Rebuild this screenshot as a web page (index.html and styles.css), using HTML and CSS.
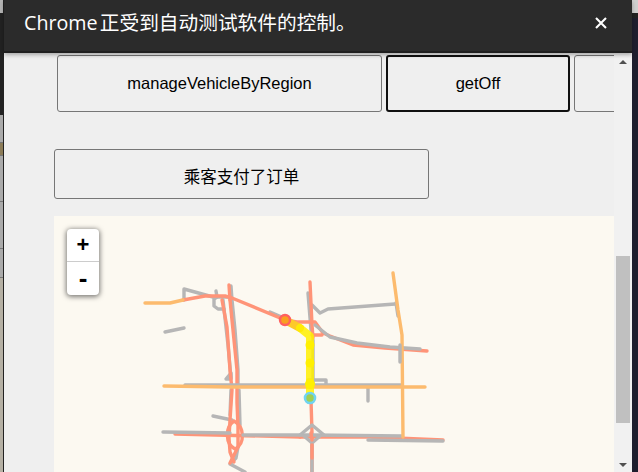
FILE: index.html
```html
<!DOCTYPE html>
<html lang="zh">
<head>
<meta charset="utf-8">
<title>Chrome</title>
<link rel="stylesheet" href="styles.css">
</head>
<body>
<div class="desktop">
  <div class="edge-left">
    <div class="el el-top"></div>
    <div class="el el-dark"></div>
    <div class="el el-a"></div>
    <div class="el el-b"></div>
    <div class="el el-c"></div>
    <div class="el el-d"></div>
    <div class="el el-e"></div>
    <div class="el el-f"></div>
  </div>
  <div class="window">
    <div class="infobar">
      <span class="info-text">Chrome 正受到自动测试软件的控制。</span>
      <svg class="close" width="12" height="12" viewBox="0 0 12 12"><path d="M1 1L11 11M11 1L1 11" stroke="#fff" stroke-width="2.1" fill="none"/></svg>
    </div>
    <div class="content">
      <div class="scroller">
        <div class="btn-row">
          <button class="btn btn-wide">manageVehicleByRegion</button>
          <button class="btn btn-focus">getOff</button>
          <button class="btn btn-next"></button>
        </div>
        <button class="btn btn-pay">乘客支付了订单</button>
        <div class="map">
          <svg class="roads" width="560" height="256" viewBox="54 216 560 256">
            <g class="gray">
              <path d="M184 300V289L213 297L230 297"/>
              <path d="M165 332L184 328"/>
              <path d="M216 291L217 297L214 299V306L218 309H224"/>
              <path d="M223 300L228 345L231 378"/>
              <path d="M231 286L232 300L235 330L238 370L238 385"/>
              <path d="M231 390L230 415"/>
              <path d="M239 390L240 425"/>
              <path d="M226 379L231 373V379Z"/>
              <path d="M213 416L232 420"/>
              <path d="M238 447L236 458L230 464L245 472"/>
              <path d="M308 293L311 330"/>
              <path d="M313 340L313 386"/>
              <path d="M312 305L320 313L328 309L395 304"/>
              <path d="M396 303L398 316"/>
              <path d="M308 380H326V386"/>
              <path d="M368 386V401"/>
              <path d="M270 312L284 318"/>
            </g>
            <g class="salmon">
              <path d="M183 300L205 296L225 296L232 298L285 320"/>
              <path d="M229 285L230 300"/>
              <path d="M222 300L227 327L230 370L232 390L230 420L229 438L230 452L234 462"/>
              <path d="M230 300L233 330L237 370L237 403L238 427L238 447L230 463"/>
              <path d="M234 421C225 427 225 444 235 449C245 444 245 427 234 421Z"/>
              <path d="M175 434L300 437"/>
              <path d="M310 282L312 325L313 338"/>
              <path d="M285 320L297 322H315L323 333L330 336L353 345L385 348L427 351"/>
              <path d="M312 335H322"/>
              <path d="M311 400L312 433L312 472"/>
              <path d="M372 437L443 440"/>
              <path d="M300 437H395"/>
            </g>
            <g class="gray">
              <path d="M163 432L230 433"/>
              <path d="M243 435L312 435L402 436"/>
              <path d="M368 440L443 441"/>
              <path d="M300 435L312 425L324 435"/>
              <path d="M304 436L312 443L320 436"/>
              <path d="M312 445V472"/>
              <path d="M315 325L330 337L357 343L390 347L420 349"/>
              <path d="M185 385L402 385"/>
            </g>
            <g class="orange">
              <path d="M145 303L170 303L183 300"/>
              <path d="M164 386L230 387L425 387"/>
              <path d="M393 273L398 310L402 335L403 437"/>
            </g>
            <path class="gray" d="M400 345L400 362"/>
            <path class="salmon-mark" d="M311 433L312 440M312 445V458"/>
            <path class="route-start" d="M285 320L300 328"/>
            <path class="route" d="M300 328L310 336V398"/>
            <circle class="blob" cx="310" cy="345" r="4.5"/>
            <circle class="blob" cx="310" cy="363" r="4.5"/>
            <circle class="blob" cx="310" cy="384" r="5"/>
            <circle class="dot-start" cx="285" cy="320" r="5"/>
            <circle class="dot-end" cx="310" cy="398" r="5"/>
          </svg>
          <div class="zoom-ctl">
            <div class="zoom-btn zoom-plus">+</div>
            <div class="zoom-btn zoom-minus">-</div>
          </div>
        </div>
      </div>
      <div class="scrollbar">
        <div class="arrow-up"></div>
        <div class="thumb"></div>
        <div class="arrow-down"></div>
      </div>
    </div>
  </div>
  <div class="edge-right">
    <div class="er er-top"></div>
    <div class="er er-dark"></div>
    <div class="er er-navy"></div>
  </div>
</div>
</body>
</html>
```
FILE: styles.css
```css
html, body {
  margin: 0;
  padding: 0;
  height: 472px;
  overflow: hidden;
}
.desktop {
  display: flex;
  width: 638px;
  height: 472px;
}
.edge-left {
  width: 3px;
  display: flex;
  flex-direction: column;
  border-right: 1px solid #222;
  flex: none;
}
.el { flex: none; }
.el-top { height: 13px; background: #b4b4b4; }
.el-dark { height: 102px; background: #222; }
.el-a { height: 27px; background: #aaa; border-bottom: 1px solid #777; }
.el-b { height: 12px; background: #8c7c58; }
.el-c { height: 45px; background: #aaa; border-top: 1px solid #777; }
.el-d { height: 46px; background: #aaa; border-top: 1px solid #777; }
.el-e { height: 28px; background: #aaa; border-top: 1px solid #777; }
.el-f { flex: 1; background: #b5b0a4; border-top: 1px solid #777; }
.window {
  width: 628px;
  flex: none;
  display: flex;
  flex-direction: column;
  background: #efefef;
}
.infobar {
  height: 53px;
  flex: none;
  box-sizing: border-box;
  background: #2b2b2b;
  border-bottom: 2px solid #1f1f1f;
  box-shadow: 0 2px 4px rgba(0, 0, 0, .3);
  display: flex;
  align-items: center;
  justify-content: space-between;
  padding: 0 25px 6px 20px;
  position: relative;
  z-index: 2;
}
.info-text {
  color: #fff;
  font: 19.7px/26px "Open Sans", "Noto Sans CJK SC", sans-serif;
  word-spacing: -3px;
  white-space: nowrap;
}
.close { display: block; }
.content {
  flex: 1;
  min-height: 0;
  display: flex;
}
.scroller {
  width: 610px;
  flex: none;
  box-sizing: border-box;
  padding-left: 50px;
  overflow: hidden;
}
.btn {
  display: block;
  box-sizing: border-box;
  flex: none;
  padding: 0;
  background: #efefef;
  border: 1px solid #767676;
  border-radius: 3px;
  color: #000;
  font: 16.5px "Liberation Sans", "Noto Sans CJK SC", sans-serif;
}
.btn-row {
  display: flex;
  gap: 4px;
  margin: 2px 0 0 3px;
  width: 557px;
  overflow: hidden;
}
.btn-wide { width: 325px; height: 57px; }
.btn-focus { width: 184px; height: 57px; border: 2px solid #101010; }
.btn-next { width: 60px; height: 57px; }
.btn-pay {
  width: 375px;
  height: 50px;
  margin-top: 37px;
  padding-top: 4px;
}
.map {
  position: relative;
  width: 560px;
  height: 300px;
  margin-top: 17px;
  background: #fcf9f1;
}
.roads {
  display: block;
  fill: none;
  stroke-linecap: round;
  stroke-linejoin: round;
}
.gray { stroke: #b6b6b6; stroke-width: 3.4; }
.salmon { stroke: #ff9478; stroke-width: 3.4; }
.orange { stroke: #fcbb6e; stroke-width: 3.4; }
.salmon-mark { stroke: #ff9478; stroke-width: 3.4; }
.route { stroke: #fff000; stroke-width: 8; opacity: .85; }
.route-start { stroke: #fdc92a; stroke-width: 8; }
.blob { fill: #fff000; }
.dot-start { fill: #f9a020; stroke: #ff6060; stroke-width: 2.4; }
.dot-end { fill: #a0cf50; stroke: #70d4f0; stroke-width: 2.6; }
.zoom-ctl {
  position: absolute;
  left: 13px;
  top: 13px;
  width: 32px;
  background: #fff;
  border-radius: 4px;
  box-shadow: 0 1px 5px 1px rgba(0, 0, 0, .5);
}
.zoom-btn {
  height: 33px;
  display: flex;
  align-items: center;
  justify-content: center;
  color: #000;
  font: bold 22px "Liberation Sans", sans-serif;
}
.zoom-plus {
  border-bottom: 1px solid #ccc;
  height: 32px;
}
.zoom-minus { font-size: 26px; }
.scrollbar {
  width: 18px;
  flex: none;
  position: relative;
  background: #f1f1f1;
}
.arrow-up {
  position: absolute;
  left: 5px;
  top: 7px;
  border: 4px solid transparent;
  border-top: 0;
  border-bottom: 4px solid #505050;
}
.thumb {
  position: absolute;
  left: 2px;
  top: 203px;
  width: 14px;
  height: 167px;
  background: #c0c0c0;
}
.arrow-down {
  position: absolute;
  left: 5px;
  bottom: 5px;
  border: 4px solid transparent;
  border-bottom: 0;
  border-top: 4px solid #505050;
}
.edge-right {
  flex: 1;
  display: flex;
  flex-direction: column;
}
.er { flex: none; }
.er-top { height: 13px; background: #cfcfcf; }
.er-dark { height: 5px; background: #222; }
.er-navy { flex: 1; background: #1e1e2e; }
```
